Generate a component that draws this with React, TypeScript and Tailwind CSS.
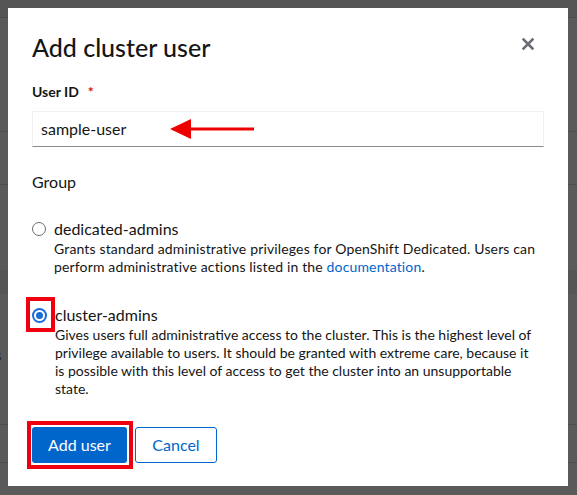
export default function App() {
  return (
    <div className="relative h-[495px] w-[577px] overflow-hidden bg-[#5a5a5a] font-['Lato',sans-serif] text-[#151515]">
      {/* dimmed page behind the modal */}
      <div className="flex flex-col">
        <div className="h-[18px] border-b border-[#4d4d4d] bg-[#555555]" />
        <div className="flex h-[114px] items-center border-b border-[#4d4d4d]">
          <span className="-ml-[52px] mt-[8px] text-[16px] text-[#1a1a1a]">Setting</span>
        </div>
        <div className="h-[53px] border-b border-[#4d4d4d]" />
        <div className="h-[85px]" />
        <div className="h-[24px] bg-[#555555]" />
        <div className="flex h-[131px] items-center border-b border-[#4d4d4d]">
          <span className="-ml-[38px] -mt-[8px] text-[16px] text-[#1a1a1a]">Users</span>
        </div>
        <div className="h-[38px] border-b border-[#4d4d4d]" />
      </div>

      {/* modal */}
      <div className="absolute left-[8px] top-[8px] flex h-[478px] w-[560px] flex-col bg-white px-6 pt-[24px]">
        <div className="flex items-start justify-between">
          <h1 className="text-[25px] leading-[30px] font-medium">Add cluster user</h1>
          <button className="mr-[10px] mt-[6px] text-[#6a6e73]">
            <svg width="12" height="12" viewBox="0 0 12 12">
              <path d="M1.5 1.5 L10.5 10.5 M10.5 1.5 L1.5 10.5" stroke="currentColor" strokeWidth="2.6" strokeLinecap="square" />
            </svg>
          </button>
        </div>

        <div className="mt-[20px] flex items-center text-[14px] font-bold leading-[20px]">
          User ID
          <span className="ml-[9px] text-[#c9190b]">*</span>
        </div>
        <div className="relative mt-[9px] flex h-[36px] items-center border border-b-[#8a8d90] border-[#f0f0f0] px-2 text-[16px]">
          sample-user
          <svg className="absolute left-[137px] top-[6px]" width="86" height="22" viewBox="0 0 86 22">
            <path d="M0 11 L21 1 L21 21 Z" fill="#ee0000" />
            <rect x="20" y="9.5" width="64" height="3" fill="#ee0000" />
          </svg>
        </div>

        <div className="mt-[24px] text-[16px] leading-[22px]">Group</div>

        <div className="mt-[25px] flex flex-col gap-[28px]">
          <label className="flex gap-[8px]">
            <span className="mt-[4px] flex h-[14px] w-[14px] shrink-0 rounded-full border border-[#6a6e73]" />
            <span className="flex flex-col">
              <span className="text-[16px] leading-[22px]">dedicated-admins</span>
              <span className="whitespace-nowrap text-[14px] leading-[18px] tracking-[0.15px]">
                Grants standard administrative privileges for OpenShift Dedicated. Users can
                <br />
                perform administrative actions listed in the <a className="text-[#0066cc]">documentation</a>.
              </span>
            </span>
          </label>

          <label className="relative flex gap-[8px]">
            <span className="mt-[4px] flex h-[15px] w-[15px] shrink-0 items-center justify-center rounded-full bg-[#1a6ad8]">
              <span className="flex h-[11px] w-[11px] items-center justify-center rounded-full bg-white">
                <span className="h-[7px] w-[7px] rounded-full bg-[#1a6ad8]" />
              </span>
            </span>
            <span className="absolute -left-[6px] -top-[7px] h-[35px] w-[29px] border-4 border-[#ee0011]" />
            <span className="flex flex-col">
              <span className="text-[16px] leading-[22px]">cluster-admins</span>
              <span className="whitespace-nowrap text-[14px] leading-[18px]">
                Gives users full administrative access to the cluster. This is the highest level of
                <br />
                privilege available to users. It should be granted with extreme care, because it
                <br />
                is possible with this level of access to get the cluster into an unsupportable
                <br />
                state.
              </span>
            </span>
          </label>
        </div>

        <div className="mt-[29px] flex gap-[8px]">
          <div className="relative">
            <button className="h-[36px] w-[95px] rounded-[3px] bg-[#0066cc] text-[16px] text-white">Add user</button>
            <span className="absolute -left-[5px] -top-[6px] h-[48px] w-[106px] border-4 border-[#ee0011]" />
          </div>
          <button className="h-[36px] w-[82px] rounded-[3px] border border-[#0066cc] text-[16px] text-[#0066cc]">Cancel</button>
        </div>
      </div>
    </div>
  );
}
